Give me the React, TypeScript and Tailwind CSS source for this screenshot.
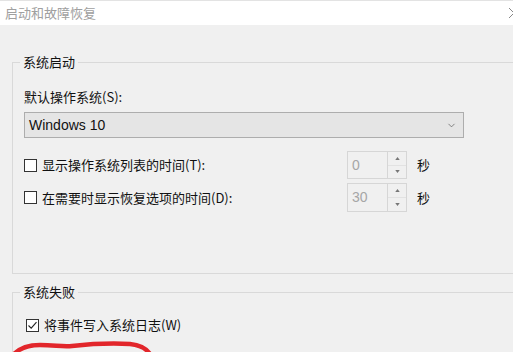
import { ChevronDown } from "lucide-react";

const font = { fontFamily: '"Noto Sans CJK SC", "Liberation Sans", sans-serif' };

function Checkbox({ checked = false }: { checked?: boolean }) {
  return (
    <span className="flex h-[13px] w-[13px] shrink-0 items-center justify-center border border-[#333] bg-white">
      {checked && (
        <svg viewBox="0 0 11 11" className="h-[11px] w-[11px]">
          <path d="M1.5 5.5 L4.2 8.2 L9.5 2.2" fill="none" stroke="#222" strokeWidth="1.1" />
        </svg>
      )}
    </span>
  );
}

function Spinner({ value, tall = false }: { value: string; tall?: boolean }) {
  return (
    <div className={`flex w-[60px] border border-[#d6d6d6] bg-[#f0f0f0] ${tall ? "h-[29px]" : "h-[28px]"}`}>
      <div className="flex flex-1 items-center pl-[4px] text-[14px] text-[#a6a6a6]" style={{ fontFamily: '"Liberation Sans", sans-serif' }}>
        {value}
      </div>
      <div className="flex w-[19px] flex-col border-l border-[#d6d6d6]">
        <div className="flex flex-1 items-center justify-center border-b border-[#e2e2e2]">
          <svg viewBox="0 0 6 4" className="h-[3px] w-[5px]">
            <path d="M0 4 L3 0 L6 4 Z" fill="#777" />
          </svg>
        </div>
        <div className="flex flex-1 items-center justify-center">
          <svg viewBox="0 0 6 4" className="h-[3px] w-[5px]">
            <path d="M0 0 L3 4 L6 0 Z" fill="#777" />
          </svg>
        </div>
      </div>
    </div>
  );
}

function TimeRow({ label, value, tall }: { label: string; value: string; tall?: boolean }) {
  return (
    <div className="flex items-center">
      <div className="flex w-[323px] items-center gap-[5px]">
        <Checkbox />
        <span>{label}</span>
      </div>
      <Spinner value={value} tall={tall} />
      <span className="ml-[10px]">秒</span>
    </div>
  );
}

export default function App() {
  return (
    <div className="relative h-[352px] w-[513px] overflow-hidden bg-[#f0f0f0] text-[13px] text-[#111]" style={font}>
      {/* Title bar */}
      <div className="flex h-[25px] items-center border-t border-[#e3e3e3] bg-white pl-[5px]">
        <span className="text-[13px] text-[#a0a0a0]">启动和故障恢复</span>
        <svg viewBox="0 0 10 10" className="ml-auto mr-[-6px] h-[10px] w-[10px]">
          <path d="M0 0 L10 10 M10 0 L0 10" stroke="#888" strokeWidth="1" />
        </svg>
      </div>

      {/* 系统启动 */}
      <fieldset className="ml-[12px] mt-[30px] w-[520px] border border-r-0 border-[#d9d9d9] pb-[61px] pl-[11px]">
        <legend className="-ml-[4px] px-[3px] text-[13px] leading-[14px]">系统启动</legend>
        <div className="mt-[18px] leading-[20px]">默认操作系统(S):</div>
        <div className="mt-[5px] flex h-[26px] w-[440px] items-center justify-between border border-[#adadad] bg-[#e5e5e5] pl-[4px] pr-[6px]">
          <span className="text-[14px]" style={{ fontFamily: '"Liberation Sans", sans-serif' }}>Windows 10</span>
          <ChevronDown className="h-[11px] w-[11px] text-[#555]" strokeWidth={1.5} />
        </div>
        <div className="mt-[13px] flex flex-col gap-[4px]">
          <TimeRow label="显示操作系统列表的时间(T):" value="0" />
          <TimeRow label="在需要时显示恢复选项的时间(D):" value="30" tall />
        </div>
      </fieldset>

      {/* 系统失败 */}
      <fieldset className="ml-[12px] mt-[11px] w-[520px] border border-r-0 border-[#d9d9d9] pb-[40px] pl-[13px]">
        <legend className="-ml-[6px] px-[3px] text-[13px] leading-[14px]">系统失败</legend>
        <div className="mt-[16px] flex h-[20px] items-center gap-[5px]">
          <Checkbox checked />
          <span>将事件写入系统日志(W)</span>
        </div>
      </fieldset>

      {/* red marker scribble */}
      <svg className="pointer-events-none absolute left-0 top-[336px] h-[16px] w-[170px]" viewBox="0 0 170 16">
        <path
          d="M14 18 C20 12, 28 9, 40 9 C55 9, 62 11, 72 10 C90 8, 110 7, 130 8 C140 9, 146 12, 150 18"
          fill="none"
          stroke="#e2262b"
          strokeWidth="4.5"
          strokeLinecap="round"
        />
      </svg>
    </div>
  );
}
